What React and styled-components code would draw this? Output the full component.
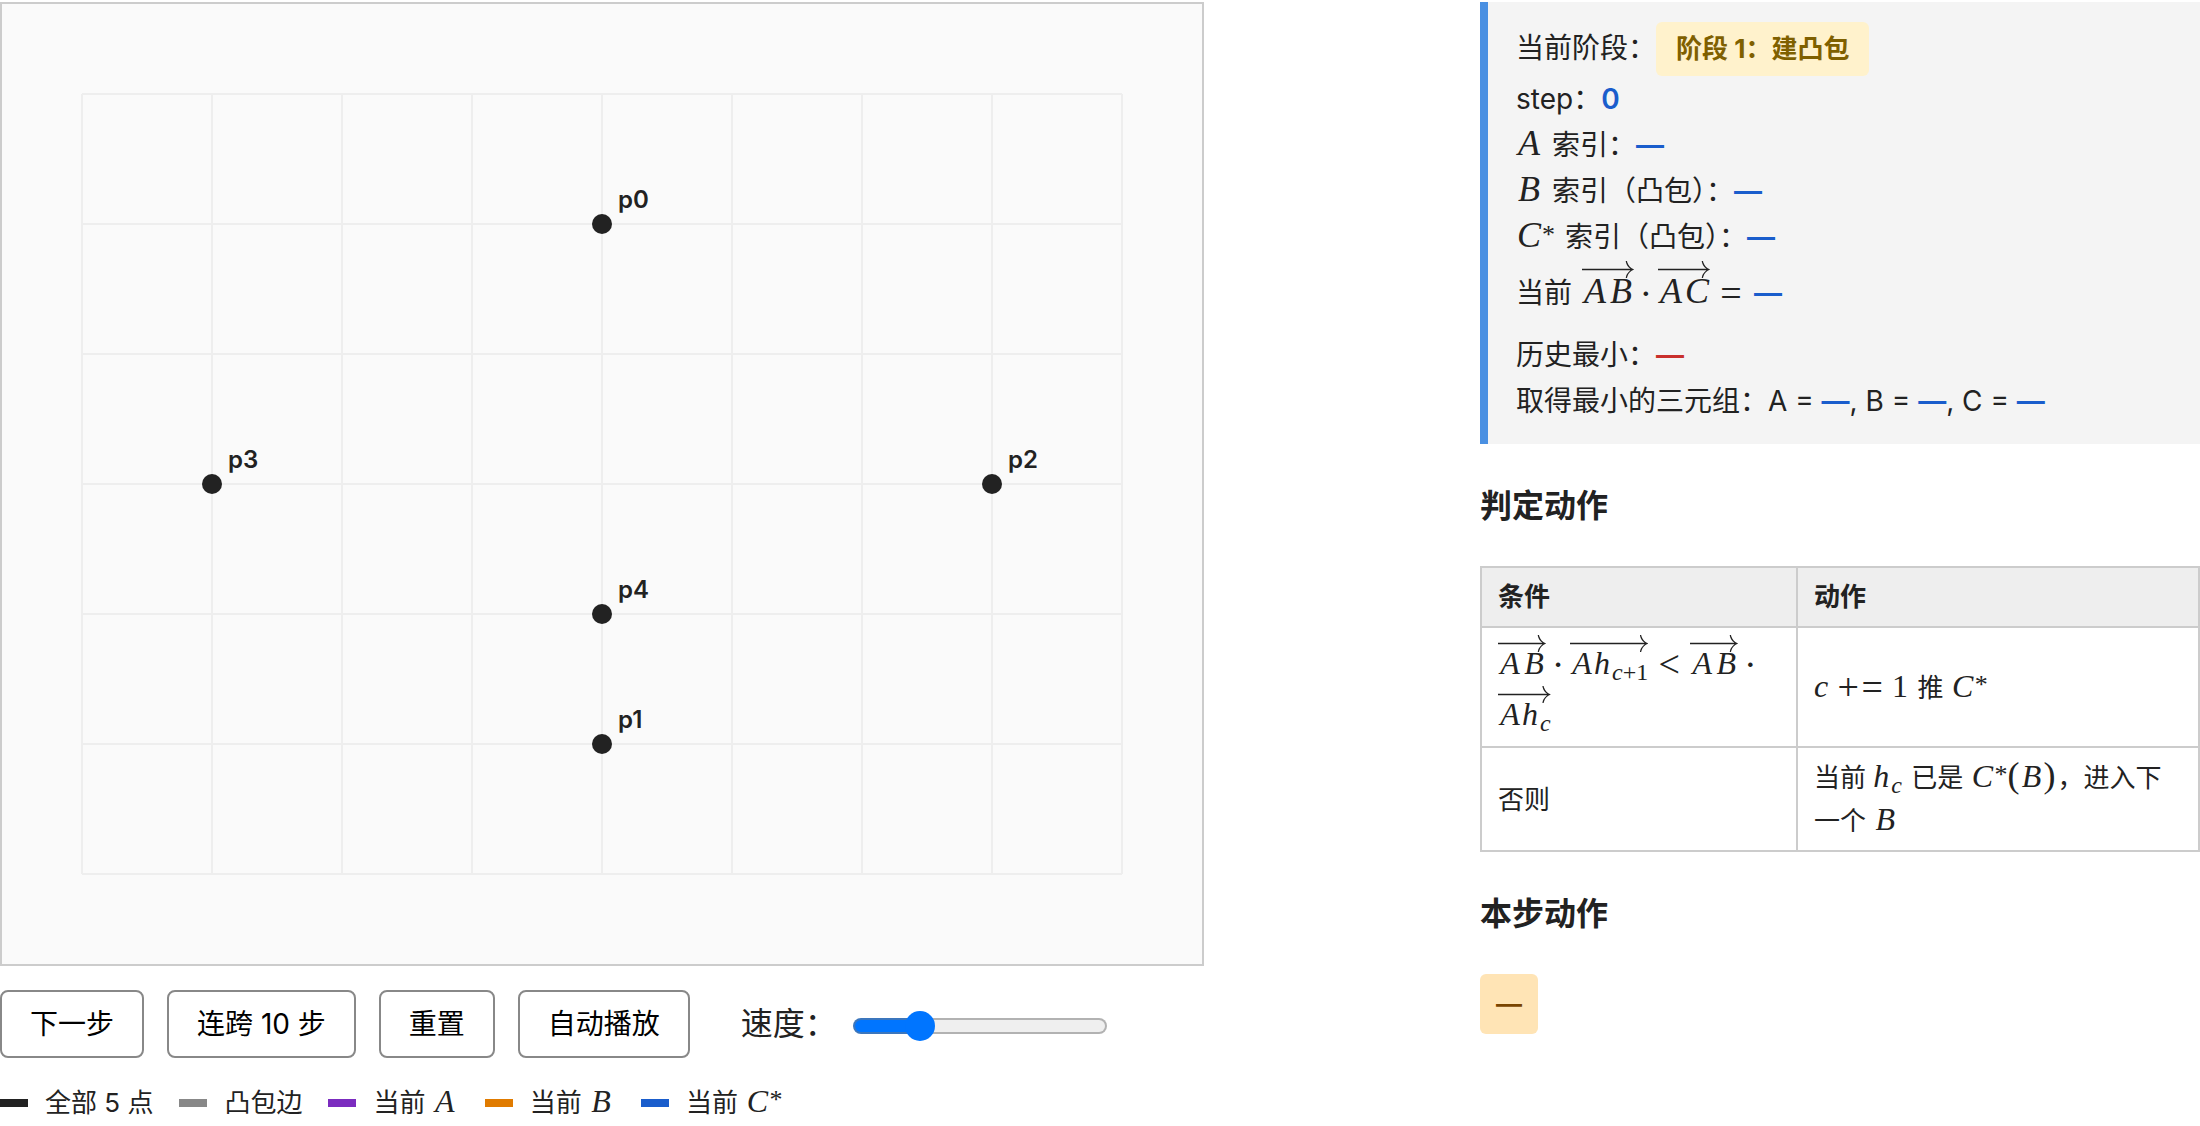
import React, { useState } from 'react';
import styled, { createGlobalStyle, css } from 'styled-components';

const sans = "Inter, 'Noto Sans CJK SC', sans-serif";
const serif = "'Liberation Serif', serif";

const GlobalStyle = createGlobalStyle`
  * {
    box-sizing: border-box;
  }
  body {
    background: #fff;
    color: #222;
    font: 28px/46px ${sans};
    margin: 0;
  }
`;

const Layout = styled.main`
  align-items: start;
  display: grid;
  gap: 40px;
  grid-template-columns: minmax(0, 2fr) minmax(0, 1fr);
  padding-top: 2px;
`;

/* plot */
const Plot = styled.svg`
  background: #fafafa;
  border: 2px solid #ccc;
  display: block;
  max-width: 1204px;
  width: 100%;
`;
const GridLine = styled.line`
  stroke: #eee;
  stroke-width: 2;
`;
const Dot = styled.circle`
  fill: #222;
`;
const DotLabel = styled.text`
  fill: #222;
  font: 600 24px ${sans};
`;

/* controls */
const Controls = styled.div`
  align-items: center;
  display: flex;
  flex-wrap: wrap;
  gap: 23px;
  margin-top: 24px;
`;
const Button = styled.button`
  background: #fff;
  border: 2px solid #888;
  border-radius: 8px;
  color: #000;
  cursor: pointer;
  font: 28px/40px ${sans};
  padding: 12px 28px;
`;
const Speed = styled.label`
  align-items: center;
  display: flex;
  font-size: 32px;
  gap: 16px;
  margin-left: 28px;
`;
const Slider = styled.input`
  appearance: none;
  background: none;
  height: 30px;
  margin: 4px 0 0;
  width: 254px;
  &::-webkit-slider-runnable-track {
    background:
      linear-gradient(to right, #0075ff var(--fill), #efefef var(--fill)) padding-box,
      linear-gradient(to right, #3b76bd var(--fill), #b2b2b2 var(--fill)) border-box;
    border: 2px solid transparent;
    border-radius: 8px;
    height: 16px;
  }
  &::-webkit-slider-thumb {
    appearance: none;
    background: #0075ff;
    border-radius: 50%;
    height: 30px;
    margin-top: -9px;
    width: 30px;
  }
`;
const Legend = styled.ul`
  display: flex;
  flex-wrap: wrap;
  font-size: 26px;
  gap: 0 26px;
  line-height: 42px;
  list-style: none;
  margin: 24px 0 0;
  padding: 0;
`;
const LegendItem = styled.li`
  align-items: center;
  display: flex;
  gap: 17px;
`;
const Swatch = styled.span`
  background: ${(props) => props.$color};
  height: 8px;
  width: 28px;
`;

/* formulas */
const Formula = styled.span`
  font-family: ${serif};
  font-size: 36px;
  line-height: 1;
  margin-left: ${(props) => (props.$after ? 2 : 0)}px;
  margin-right: 2px;
  i {
    display: inline-block;
    min-width: 26px;
    text-align: center;
  }
  ${(props) =>
    props.$small &&
    css`
      font-size: 32px;
      i {
        min-width: 24px;
      }
    `}
`;
const Low = styled.em`
  display: inline-block;
  min-width: ${(props) => (props.$wide ? 18 : 14)}px;
`;
const Star = styled.span`
  display: inline-block;
  font-size: 26px;
  line-height: 0;
  vertical-align: 4px;
`;
const Sub = styled.span`
  font-size: 24px;
  line-height: 0;
  vertical-align: -6px;
`;
const Paren = styled.span`
  font-size: 36px;
  line-height: 0;
`;
const Op = styled.span`
  display: inline-block;
  font-size: 38px;
  line-height: 0;
  min-width: 24px;
  text-align: center;
  vertical-align: -3px;
`;
const Rel = styled(Op)`
  margin: 0 9px;
`;
const VecWrap = styled.span`
  display: inline-block;
  position: relative;
`;
const VecArrow = styled.svg`
  fill: currentColor;
  height: 17px;
  left: 0;
  position: absolute;
  top: -12px;
  width: 100%;
`;

const Vec = ({ children }) => (
  <VecWrap>
    <VecArrow viewBox="0 0 400000 522" preserveAspectRatio="xMaxYMin slice" aria-hidden="true">
      <path d="M0 241v40h399891c-47.3 35.3-84 78-110 128-16.7 32-27.7 63.7-33 95 0 1.3-.2 2.7-.5 4-.3 1.3-.5 2.3-.5 3 0 7.3 6.7 11 20 11 8 0 13.2-.8 15.5-2.5 2.3-1.7 4.2-5.5 5.5-11.5 2-13.3 5.7-27 11-41 14.7-44.7 39-84.5 73-119.5s73.7-60.2 119-75.5c6-2 9-5.7 9-11s-3-9-9-11c-45.3-15.3-85-40.5-119-75.5s-58.3-74.8-73-119.5c-4.7-14-8.3-27.3-11-40-1.3-6.7-3.2-10.8-5.5-12.5-2.3-1.7-7.5-2.5-15.5-2.5-14 0-21 3.7-21 11 0 2 2 10.3 6 25 20.7 83.3 67 151.7 139 205z" />
    </VecArrow>
    {children}
  </VecWrap>
);

/* status panel */
const Panel = styled.section`
  background: #f4f4f4;
  border-left: 8px solid #4a90e2;
  padding: 20px 28px;
`;
const VectorRow = styled.div`
  margin-bottom: 16px;
  padding-top: 10px;
`;
const Phase = styled.span`
  background: #fff2cc;
  border-radius: 6px;
  color: #7f6000;
  display: inline-block;
  font-size: 26px;
  font-weight: 700;
  line-height: 42px;
  padding: 6px 20px;
`;
const Value = styled.strong`
  color: ${(props) => (props.$min ? '#c9302c' : '#1a5dcc')};
  font-weight: 600;
  line-height: 1;
`;

/* tables */
const Title = styled.h3`
  font-size: 32px;
  font-weight: 700;
  line-height: 52px;
  margin: 36px 0 34px;
`;
const Table = styled.table`
  border-collapse: collapse;
  font-size: 26px;
  line-height: 42px;
  width: 100%;
`;
const Th = styled.th`
  background: #eee;
  border: 2px solid #ccc;
  padding: 8px 16px;
  text-align: left;
  width: ${(props) => (props.$first ? '44%' : 'auto')};
`;
const Td = styled.td`
  border: 2px solid #ccc;
  line-height: ${(props) => (props.$tall ? 51 : 43)}px;
  padding: ${(props) => (props.$tall ? '11px 16px 5px' : '8px 16px')};
`;
const Action = styled.div`
  background: #ffe4b5;
  border-radius: 6px;
  color: #7a4500;
  font-size: 26px;
  font-weight: 600;
  line-height: 44px;
  padding: 8px 16px;
  width: fit-content;
`;

const CELL = 130;
const points = [
  { name: 'p0', x: 4, y: 1 },
  { name: 'p1', x: 4, y: 5 },
  { name: 'p2', x: 7, y: 3 },
  { name: 'p3', x: 1, y: 3 },
  { name: 'p4', x: 4, y: 4 },
];

const px = (x) => 80 + x * CELL;
const py = (y) => 90 + y * CELL;

const Board = () => (
  <Plot viewBox="0 0 1200 960">
    {[0, 1, 2, 3, 4, 5, 6, 7, 8].map((x) => (
      <GridLine key={x} x1={px(x)} x2={px(x)} y1={py(0)} y2={py(6)} />
    ))}
    {[0, 1, 2, 3, 4, 5, 6].map((y) => (
      <GridLine key={y} x1={px(0)} x2={px(8)} y1={py(y)} y2={py(y)} />
    ))}
    {points.map(({ name, x, y }) => (
      <g key={name}>
        <Dot cx={px(x)} cy={py(y)} r="10" />
        <DotLabel x={px(x) + 16} y={py(y) - 16}>
          {name}
        </DotLabel>
      </g>
    ))}
  </Plot>
);

const App = () => {
  const [speed, setSpeed] = useState(23);

  return (
    <>
      <GlobalStyle />
      <Layout>
        <section>
          <Board />
          <Controls>
            <Button type="button">下一步</Button>
            <Button type="button">连跨 10 步</Button>
            <Button type="button">重置</Button>
            <Button type="button">自动播放</Button>
            <Speed>
              速度：
              <Slider
                type="range"
                min="0"
                max="100"
                value={speed}
                onChange={(e) => setSpeed(Number(e.target.value))}
                style={{ '--fill': `${speed}%` }}
              />
            </Speed>
          </Controls>
          <Legend>
            <LegendItem>
              <Swatch $color="#222" />
              <span>全部 5 点</span>
            </LegendItem>
            <LegendItem>
              <Swatch $color="#888" />
              <span>凸包边</span>
            </LegendItem>
            <LegendItem>
              <Swatch $color="#7b2cbf" />
              <span>
                当前 <Formula $small><i>A</i></Formula>
              </span>
            </LegendItem>
            <LegendItem>
              <Swatch $color="#e07b00" />
              <span>
                当前 <Formula $small><i>B</i></Formula>
              </span>
            </LegendItem>
            <LegendItem>
              <Swatch $color="#1a5dcc" />
              <span>
                当前 <Formula $small><i>C</i><Star>*</Star></Formula>
              </span>
            </LegendItem>
          </Legend>
        </section>

        <aside>
          <Panel>
            <div>
              当前阶段：<Phase>阶段 1：建凸包</Phase>
            </div>
            <div>
              step：<Value>0</Value>
            </div>
            <div>
              <Formula><i>A</i></Formula> 索引：<Value>—</Value>
            </div>
            <div>
              <Formula><i>B</i></Formula> 索引（凸包）：<Value>—</Value>
            </div>
            <div>
              <Formula><i>C</i><Star>*</Star></Formula> 索引（凸包）：<Value>—</Value>
            </div>
            <VectorRow>
              当前{' '}
              <Formula $after>
                <Vec><i>A</i><i>B</i></Vec>
                <Op>·</Op>
                <Vec><i>A</i><i>C</i></Vec>
                <Rel>=</Rel>
              </Formula>
              <Value>—</Value>
            </VectorRow>
            <div>
              历史最小：<Value $min>—</Value>
            </div>
            <div>
              取得最小的三元组：A = <Value>—</Value>, B = <Value>—</Value>, C = <Value>—</Value>
            </div>
          </Panel>

          <Title>判定动作</Title>
          <Table>
            <thead>
              <tr>
                <Th $first>条件</Th>
                <Th>动作</Th>
              </tr>
            </thead>
            <tbody>
              <tr>
                <Td $tall>
                  <Formula $small>
                    <Vec><i>A</i><i>B</i></Vec>
                    <Op>·</Op>
                    <Vec><i>A</i><Low $wide>h</Low><Sub><em>c</em>+1</Sub></Vec>
                    <Rel>&lt;</Rel>
                    <Vec><i>A</i><i>B</i></Vec>
                    <Op>·</Op>{' '}
                    <Vec><i>A</i><Low $wide>h</Low><Sub><em>c</em></Sub></Vec>
                  </Formula>
                </Td>
                <Td>
                  <Formula $small>
                    <Low>c</Low> <Op>+</Op><Op>=</Op> 1
                  </Formula>{' '}
                  推 <Formula $small><i>C</i><Star>*</Star></Formula>
                </Td>
              </tr>
              <tr>
                <Td>否则</Td>
                <Td>
                  当前 <Formula $small><Low $wide>h</Low><Sub><em>c</em></Sub></Formula> 已是{' '}
                  <Formula $small>
                    <i>C</i><Star>*</Star><Paren>(</Paren><i>B</i><Paren>)</Paren>
                  </Formula>
                  ，进入下一个 <Formula $small><i>B</i></Formula>
                </Td>
              </tr>
            </tbody>
          </Table>

          <Title>本步动作</Title>
          <Action>—</Action>
        </aside>
      </Layout>
    </>
  );
};

export default App;
